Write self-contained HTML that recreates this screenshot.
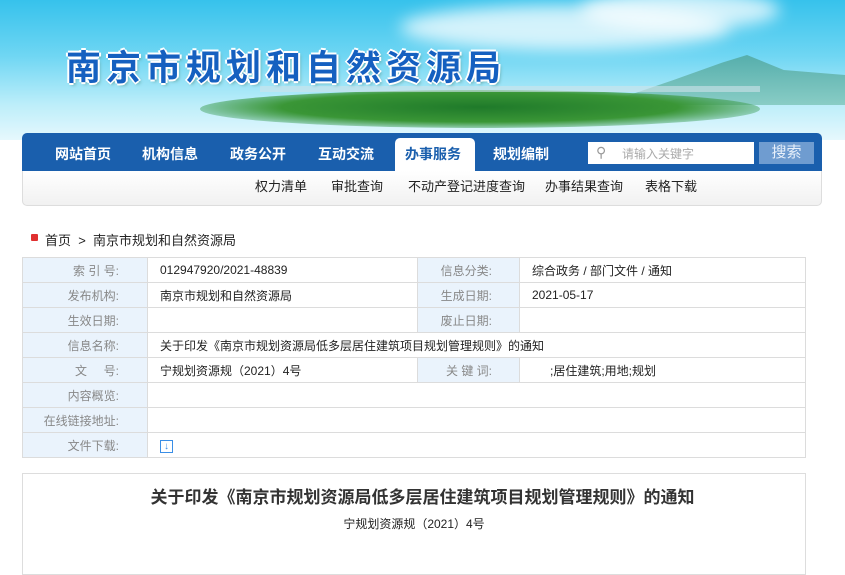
<!DOCTYPE html>
<html><head><meta charset="utf-8"><style>
body{margin:0;width:845px;height:562px;overflow:hidden;background:#fff;font-family:"Liberation Sans","Noto Sans CJK SC",sans-serif;position:relative}
.hdr{position:absolute;left:0;top:0;width:845px;height:140px;background:linear-gradient(180deg,#36c2ec 0%,#6fd6f3 40%,#bdeefa 75%,#e6f8fd 100%)}
.cloud{position:absolute;border-radius:50%;background:rgba(255,255,255,.75);filter:blur(8px)}
.title{position:absolute;left:66px;top:45px;font-size:35px;font-weight:bold;color:#1560c0;letter-spacing:5px;font-family:"Noto Sans CJK SC",sans-serif;line-height:42px;text-shadow:-2px 0 #fff,2px 0 #fff,0 -2px #fff,0 2px #fff,2px 2px 3px #6aa}
.nav{position:absolute;left:22px;top:133px;width:800px;height:38px;background:#1a5fad;border-radius:5px 5px 0 0}
.nav span{position:absolute;top:13px;color:#fff;font-weight:bold;font-size:14px;line-height:16px}
.act{position:absolute;left:373px;top:5px;width:80px;height:33px;background:#fff;border-radius:5px 5px 0 0}
.sub{position:absolute;left:22px;top:171px;width:798px;height:34px;border:1px solid #ddd;border-top:0;border-radius:0 0 5px 5px;background:linear-gradient(#fff,#f1f1f1)}
.sub span{position:absolute;top:8px;font-size:13px;color:#222;line-height:16px}
table{position:absolute;left:22px;top:257px;border-collapse:collapse;width:784px;font-size:12px}
td{border:1px solid #dcdcdc;height:24px;padding:0}
td.l{background:#eaf3fc;color:#888;text-align:right;padding-right:28px;width:96px}
td.l2{background:#eaf3fc;color:#888;text-align:right;padding-right:27px;width:74px}
td.v{padding-left:12px;color:#222}
</style></head><body>
<div class="hdr">
<div class="cloud" style="left:400px;top:5px;width:330px;height:45px"></div>
<div class="cloud" style="left:580px;top:-10px;width:200px;height:40px"></div>
<div style="position:absolute;left:600px;top:55px;width:245px;height:50px;clip-path:polygon(0 100%,30% 50%,50% 15%,60% 0,75% 30%,100% 40%,100% 100%);background:linear-gradient(#4fa49a,#7cc4b8);opacity:.8"></div>
<div style="position:absolute;left:200px;top:90px;width:560px;height:38px;border-radius:50%;background:radial-gradient(ellipse at 50% 45%,#1f7a2a,#3a9636 50%,rgba(80,170,120,.4) 75%,transparent)"></div>
<div style="position:absolute;left:260px;top:86px;width:500px;height:6px;background:#cfe3ea;opacity:.6"></div>
</div>
<div class="title">南京市规划和自然资源局</div>
<div class="nav">
<div class="act"></div>
<span style="left:33px">网站首页</span>
<span style="left:120px">机构信息</span>
<span style="left:208px">政务公开</span>
<span style="left:296px">互动交流</span>
<span style="left:383px;color:#1a5fad">办事服务</span>
<span style="left:471px">规划编制</span>
<div style="position:absolute;left:566px;top:9px;width:166px;height:22px;background:#fff"><span style="left:8px;top:2px;color:#999;font-weight:normal;font-size:14px">&#9906;</span><span style="left:34px;top:4px;color:#aaa;font-weight:normal;font-size:12px">请输入关键字</span></div>
<div style="position:absolute;left:737px;top:9px;width:55px;height:22px;background:#6f9cd0;color:#e8f0fa;font-size:15px;text-align:center;line-height:22px">搜索</div>
</div>
<div class="sub">
<span style="left:232px">权力清单</span>
<span style="left:308px">审批查询</span>
<span style="left:385px">不动产登记进度查询</span>
<span style="left:522px">办事结果查询</span>
<span style="left:622px">表格下载</span>
</div>
<div style="position:absolute;left:31px;top:234px;width:7px;height:7px;background:#e03030;border-radius:1px"></div>
<div style="position:absolute;left:45px;top:230px;font-size:13px;color:#222">首页 &nbsp;&gt;&nbsp; 南京市规划和自然资源局</div>
<table>
<tr><td class="l">索 引 号:</td><td class="v" style="width:257px">012947920/2021-48839</td><td class="l2">信息分类:</td><td class="v">综合政务 / 部门文件 / 通知</td></tr>
<tr><td class="l">发布机构:</td><td class="v">南京市规划和自然资源局</td><td class="l2">生成日期:</td><td class="v">2021-05-17</td></tr>
<tr><td class="l">生效日期:</td><td class="v"></td><td class="l2">废止日期:</td><td class="v"></td></tr>
<tr><td class="l">信息名称:</td><td class="v" colspan="3">关于印发《南京市规划资源局低多层居住建筑项目规划管理规则》的通知</td></tr>
<tr><td class="l">文 &nbsp; &nbsp; 号:</td><td class="v">宁规划资源规（2021）4号</td><td class="l2">关 键 词:</td><td class="v" style="padding-left:30px">;居住建筑;用地;规划</td></tr>
<tr><td class="l">内容概览:</td><td class="v" colspan="3"></td></tr>
<tr><td class="l">在线链接地址:</td><td class="v" colspan="3"></td></tr>
<tr><td class="l">文件下载:</td><td class="v" colspan="3"><span style="display:inline-block;width:11px;height:11px;border:1px solid #3a8ee6;color:#3a8ee6;font-size:10px;line-height:11px;text-align:center;font-weight:bold">↓</span></td></tr>
</table>
<div style="position:absolute;left:22px;top:473px;width:782px;height:100px;border:1px solid #ddd"></div>
<div style="position:absolute;left:0;width:845px;top:483px;text-align:center;font-size:17px;font-weight:bold;color:#333">关于印发《南京市规划资源局低多层居住建筑项目规划管理规则》的通知</div>
<div style="position:absolute;left:0;width:828px;top:515px;text-align:center;font-size:12px;color:#222">宁规划资源规（2021）4号</div>
</body></html>
